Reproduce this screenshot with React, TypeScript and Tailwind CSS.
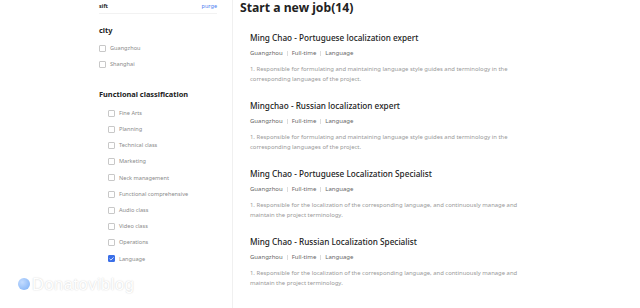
import { Check } from 'lucide-react'

const cities = ['Guangzhou', 'Shanghai']

const functions = [
  'Fine Arts',
  'Planning',
  'Technical class',
  'Marketing',
  'Neck management',
  'Functional comprehensive',
  'Audio class',
  'Video class',
  'Operations',
  'Language',
]

const jobs = [
  {
    title: 'Ming Chao - Portuguese localization expert',
    desc: '1. Responsible for formulating and maintaining language style guides and terminology in the corresponding languages of the project.',
  },
  {
    title: 'Mingchao - Russian localization expert',
    desc: '1. Responsible for formulating and maintaining language style guides and terminology in the corresponding languages of the project.',
  },
  {
    title: 'Ming Chao - Portuguese Localization Specialist',
    desc: '1. Responsible for the localization of the corresponding language, and continuously manage and maintain the project terminology.',
  },
  {
    title: 'Ming Chao - Russian Localization Specialist',
    desc: '1. Responsible for the localization of the corresponding language, and continuously manage and maintain the project terminology.',
  },
]

function Box({ checked }: { checked?: boolean }) {
  return (
    <span
      className={`flex items-center justify-center w-[7px] h-[7px] rounded-[1px] border shrink-0 ${
        checked ? 'bg-[#3b6fe8] border-[#3b6fe8]' : 'bg-white border-[#c8c8c8]'
      }`}
    >
      {checked && <Check size={6} strokeWidth={4} className="text-white" />}
    </span>
  )
}

function Option({ label, checked }: { label: string; checked?: boolean }) {
  return (
    <div className="flex items-center gap-[4px] h-[16.2px]">
      <Box checked={checked} />
      <span className="text-[5.6px] text-[#8a8a8a]">{label}</span>
    </div>
  )
}

export default function App() {
  return (
    <div
      className="relative flex w-[640px] h-[308px] bg-white overflow-hidden"
      style={{ fontFamily: '"Noto Sans", "Open Sans", sans-serif' }}
    >
      {/* Filters */}
      <aside className="w-[233px] shrink-0 border-r border-[#f0f0f0] pl-[99px] pr-[15px]">
        <div className="flex items-center justify-between h-[14px] border-b border-[#f2f2f2]">
          <span className="text-[5.5px] font-bold text-[#222]">sift</span>
          <span className="text-[5.5px] text-[#4a7cf0]">purge</span>
        </div>

        <div className="mt-[11px] h-[12px] flex items-center text-[7.4px] font-bold text-[#222]">city</div>
        <div className="mt-[3px]">
          {cities.map((c) => (
            <div key={c} className="flex items-center gap-[4px] h-[16px]">
              <Box />
              <span className="text-[5.6px] text-[#8a8a8a]">{c}</span>
            </div>
          ))}
        </div>

        <div className="mt-[17px] h-[12px] flex items-center text-[7.4px] font-bold text-[#222]">
          Functional classification
        </div>
        <div className="mt-[4px] pl-[9px]">
          {functions.map((f) => (
            <Option key={f} label={f} checked={f === 'Language'} />
          ))}
        </div>
      </aside>

      {/* Job list */}
      <main className="flex-1">
        <h1 className="h-[15px] leading-[15px] pl-[7px] text-[12.2px] font-bold text-[#222]">
          Start a new job(14)
        </h1>
        <div className="mt-[9px]">
          {jobs.map((j) => (
            <div key={j.title} className="h-[68px] pl-[17px] pt-[9px]">
              <div className="h-[10px] flex items-center text-[8.2px] font-medium text-[#222]">{j.title}</div>
              <div className="mt-[6px] h-[8px] flex items-center gap-[4px] text-[6px] text-[#666]">
                <span>Guangzhou</span>
                <span className="w-px h-[5px] bg-[#ddd]" />
                <span>Full-time</span>
                <span className="w-px h-[5px] bg-[#ddd]" />
                <span>Language</span>
              </div>
              <p className="mt-[7px] w-[272px] text-[5.9px] leading-[10px] text-[#999]">{j.desc}</p>
            </div>
          ))}
        </div>
      </main>

      {/* watermark */}
      <div className="absolute left-[18px] top-[276px] flex items-center gap-[2px] pointer-events-none">
        <span className="w-[12px] h-[12px] rounded-full bg-[radial-gradient(circle_at_35%_35%,#c4dcff,#7aaef5)]" />
        <span
          className="text-[16.5px] leading-none text-white tracking-[0.5px]"
          style={{ fontFamily: '"Liberation Sans", sans-serif', textShadow: '0 0 1.5px #c8c8c8' }}
        >
          Donatoviblog
        </span>
      </div>
    </div>
  )
}
